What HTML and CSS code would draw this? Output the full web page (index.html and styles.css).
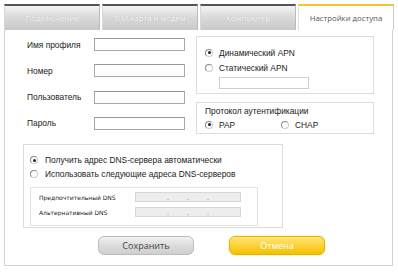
FILE: index.html
```html
<!DOCTYPE html>
<html lang="ru">
<head>
<meta charset="utf-8">
<link rel="stylesheet" href="styles.css">
</head>
<body>
<div class="app">
  <div class="tabs">
    <div class="tab">Подключение</div>
    <div class="tab">SIM-карта и модем</div>
    <div class="tab">Компьютер</div>
    <div class="tab active">Настройки доступа</div>
  </div>
  <div class="panel">
    <div class="top">
      <div class="form">
        <span class="lbl">Имя профиля</span><span class="inp"></span>
        <span class="lbl">Номер</span><span class="inp"></span>
        <span class="lbl">Пользователь</span><span class="inp"></span>
        <span class="lbl">Пароль</span><span class="inp"></span>
      </div>
      <div class="side">
        <div class="box apn">
          <div class="opt"><span class="radio on"></span>Динамический APN</div>
          <div class="opt"><span class="radio"></span>Статический APN</div>
          <span class="inp apn-inp"></span>
        </div>
        <div class="box auth">
          <div class="title">Протокол аутентификации</div>
          <div class="auth-row">
            <div class="opt pap"><span class="radio on"></span>PAP</div>
            <div class="opt"><span class="radio"></span>CHAP</div>
          </div>
        </div>
      </div>
    </div>
    <div class="box dns">
      <div class="opt"><span class="radio on"></span>Получить адрес DNS-сервера автоматически</div>
      <div class="opt"><span class="radio"></span>Использовать следующие адреса DNS-серверов</div>
      <div class="dns-inner">
        <span class="small">Предпочтительный DNS</span>
        <span class="ip"><i>.</i><i>.</i><i>.</i></span>
        <span class="small">Альтернативный DNS</span>
        <span class="ip"><i>.</i><i>.</i><i>.</i></span>
      </div>
    </div>
    <div class="buttons">
      <button class="btn save">Сохранить</button>
      <button class="btn cancel">Отмена</button>
    </div>
  </div>
</div>
</body>
</html>
```

FILE: styles.css
```css
* { box-sizing: border-box; }
body {
  margin: 0;
  background: #fff;
  font-family: "Liberation Sans", sans-serif;
  color: #222;
}
.app {
  padding: 4px 0 0 4px;
  width: 393px;
}
.tabs {
  display: flex;
  gap: 2px;
  height: 26px;
}
.tab {
  flex: 0 0 96px;
  border-top: 2px solid #555;
  background: linear-gradient(#f4f4f4, #dadada 45%, #c9c9c9);
  color: #fff;
  font-family: "Open Sans", sans-serif;
  font-size: 7.8px;
  display: flex;
  align-items: center;
  justify-content: center;
  text-shadow: 0 0 1px #999;
  border-left: 1px solid #d8d8d8;
  border-right: 1px solid #bbb;
}
.tab.active {
  background: #fff;
  border-top: 2px solid #f2c531;
  border-left: 1px solid #ddd;
  border-right: 1px solid #ccc;
  color: #555;
  text-shadow: none;
}
.panel {
  width: 389px;
  height: 236px;
  border: 1px solid #d4d4d4;
  border-top: none;
  padding: 6px 0 0 18px;
}
.top {
  display: flex;
  gap: 11px;
}
.form {
  display: grid;
  grid-template-columns: 67px 91px;
  grid-auto-rows: 13px;
  row-gap: 13.3px;
  padding: 2px 0 0 4px;
  align-items: center;
}
.lbl {
  font-size: 8.4px;
  color: #222;
}
.inp {
  display: block;
  height: 13px;
  border: 1px solid #a8a8a8;
  border-top-color: #999;
  background: #fff;
}
.side {
  display: flex;
  flex-direction: column;
  gap: 8px;
  width: 178px;
}
.box {
  border: 1px solid #dcdcdc;
}
.apn {
  height: 58px;
  padding: 8px 0 0 8px;
  display: flex;
  flex-direction: column;
}
.opt {
  display: flex;
  align-items: center;
  font-size: 8.4px;
  height: 15px;
  white-space: nowrap;
}
.radio {
  width: 8px;
  height: 8px;
  border-radius: 50%;
  border: 1px solid #8a8a8a;
  border-right-color: #ccc;
  border-bottom-color: #ccc;
  background: #fff;
  margin-right: 6px;
  flex: none;
  position: relative;
}
.radio.on::after {
  content: "";
  position: absolute;
  left: 1.5px;
  top: 1.5px;
  width: 3px;
  height: 3px;
  border-radius: 50%;
  background: #222;
}
.apn-inp {
  width: 90px;
  height: 12px;
  margin: 2px 0 0 14px;
  border-color: #d0d0d0;
}
.auth {
  height: 32px;
  padding: 2px 0 0 8px;
}
.title {
  font-size: 8.4px;
  height: 12px;
  display: flex;
  align-items: center;
}
.auth-row {
  display: flex;
}
.pap { width: 76px; }
.dns {
  width: 260px;
  height: 84px;
  margin-top: 10px;
  padding: 8px 0 0 6px;
}
.dns .opt { padding-left: 0; height: 14px; }
.dns .opt .radio { margin-right: 7px; }
.dns-inner {
  width: 228px;
  height: 39px;
  margin-top: 6px;
  border: 1px solid #e2e2e2;
  display: grid;
  grid-template-columns: 96px 106px;
  grid-auto-rows: 10px;
  row-gap: 5px;
  padding: 4px 0 0 8px;
  align-items: center;
}
.small {
  font-size: 6px;
  font-family: "DejaVu Sans", sans-serif;
  color: #222;
}
.ip {
  height: 10px;
  background: #ededed;
  border: 1px solid #d6d6d6;
  display: flex;
  justify-content: space-around;
  padding: 0 22px;
  font-size: 7px;
  line-height: 9px;
  color: #666;
}
.ip i { font-style: normal; }
.buttons {
  display: flex;
  gap: 35px;
  margin: 8px 0 0 75px;
}
.btn {
  width: 96px;
  height: 19px;
  border-radius: 6px;
  font-family: "Open Sans", sans-serif;
  font-size: 9px;
  padding: 0;
}
.save {
  border: 1px solid #bdbdbd;
  background: linear-gradient(#f2f2f2, #dcdcdc 50%, #cfcfcf);
  color: #444;
}
.cancel {
  border: 1px solid #e2b400;
  background: linear-gradient(#ffe67a, #fbd23a 50%, #f4c000);
  color: #fff;
  box-shadow: 0 0 2px #f6dd70;
}
```
